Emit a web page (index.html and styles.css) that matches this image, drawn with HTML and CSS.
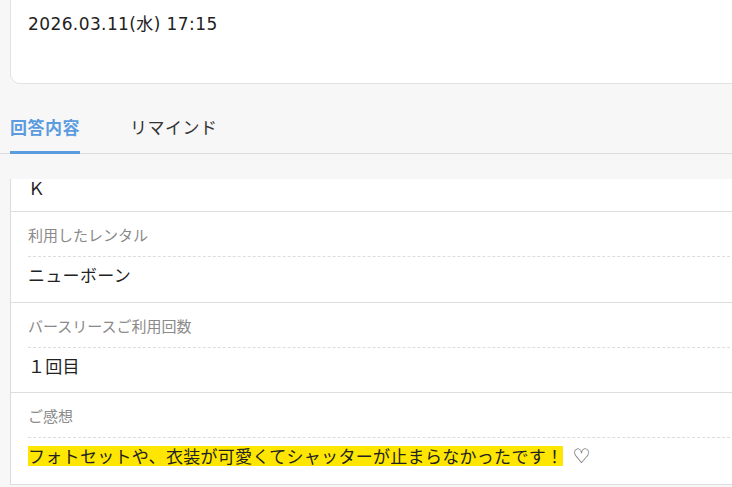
FILE: index.html
```html
<!DOCTYPE html>
<html lang="ja">
<head>
<meta charset="utf-8">
<link rel="stylesheet" href="styles.css">
</head>
<body>
<div class="page">
  <div class="card">
    <div class="date">2026.03.11(水) 17:15</div>
  </div>
  <div class="tabs">
    <div class="tab active">回答内容</div>
    <div class="tab">リマインド</div>
  </div>
  <div class="panel">
    <div class="row first">
      <div class="value">Ｋ</div>
    </div>
    <div class="row">
      <div class="label">利用したレンタル</div>
      <div class="value">ニューボーン</div>
    </div>
    <div class="row">
      <div class="label">バースリースご利用回数</div>
      <div class="value">１回目</div>
    </div>
    <div class="row">
      <div class="label">ご感想</div>
      <div class="value"><span class="marker">フォトセットや、衣装が可愛くてシャッターが止まらなかったです！</span><span class="heart">♡</span></div>
    </div>
  </div>
</div>
</body>
</html>
```

FILE: styles.css
```css
html, body {
  margin: 0;
  padding: 0;
  background: #f7f7f7;
  overflow: hidden;
}
body {
  font-family: "DejaVu Sans", "Noto Sans CJK JP", sans-serif;
  color: #222;
}
.page {
  padding-left: 10px;
  width: 760px;
}
.card {
  margin-top: -10px;
  background: #fff;
  border: 1px solid #e2e2e2;
  border-radius: 10px;
  padding: 21px 17px 46px;
}
.date {
  font-size: 17px;
  line-height: 25px;
  letter-spacing: 0.4px;
  color: #222;
}
.tabs {
  display: flex;
  gap: 50px;
  padding-top: 31px;
  border-bottom: 1px solid #dcdcdc;
  margin-left: -10px;
  padding-left: 10px;
}
.tab {
  font-family: "Noto Sans CJK JP", sans-serif;
  font-size: 17px;
  line-height: 24px;
  letter-spacing: 0.5px;
  padding-bottom: 12px;
  color: #333;
  border-bottom: 3px solid transparent;
  margin-bottom: -1px;
}
.tab.active {
  color: #5b9be0;
  font-weight: bold;
  border-bottom-color: #5b9be0;
}
.panel {
  margin-top: 25px;
  background: #fff;
  border-left: 1px solid #dcdcdc;
  padding-left: 17px;
  overflow: hidden;
}
.row {
  border-bottom: 1px solid #dedede;
  margin-left: -17px;
  padding-left: 17px;
}
.row.first .value {
  margin-top: -4px;
  padding: 0 0 11px;
}
.label {
  font-family: "Noto Sans CJK JP", sans-serif;
  font-size: 15px;
  line-height: 22px;
  color: #8a8a8a;
  padding: 12px 0 10px;
  border-bottom: 1px dashed #dddddd;
}
.value {
  font-family: "Noto Sans CJK JP", sans-serif;
  font-size: 17px;
  line-height: 25px;
  letter-spacing: 0.3px;
  color: #222;
  padding: 5px 0 14.5px;
}
.marker {
  background: linear-gradient(transparent 12%, #ffe600 12%, #ffe600 90%, transparent 90%);
}
.heart {
  font-family: "DejaVu Sans", sans-serif;
  font-size: 20px;
  margin-left: 9px;
  color: #333;
}
```
